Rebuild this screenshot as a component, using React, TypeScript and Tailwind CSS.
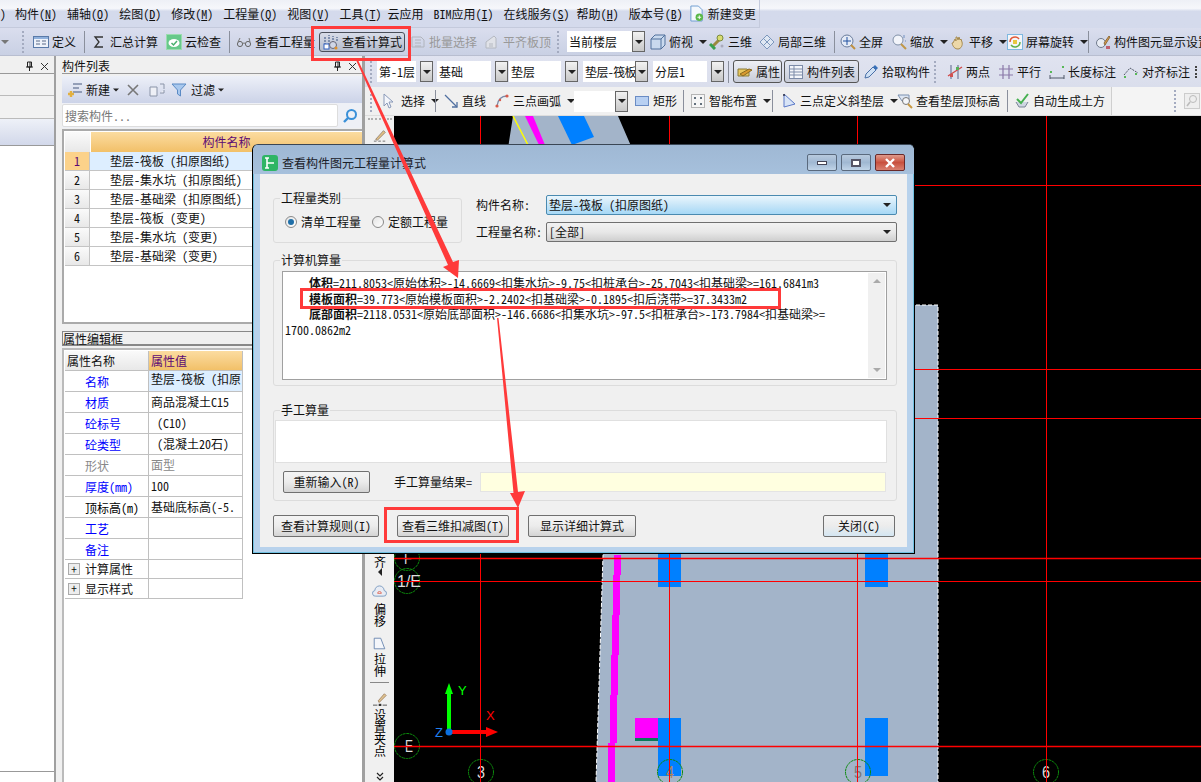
import React from "react";

const Ic = ({ children, className = "" }: { children: React.ReactNode; className?: string }) => (
  <svg viewBox="0 0 16 16" className={`w-4 h-4 shrink-0 ${className}`} fill="none">
    {children}
  </svg>
);

const icons: Record<string, React.ReactNode> = {
  define: (
    <>
      <rect x="0.5" y="2.5" width="15" height="11" fill="#eef2fa" stroke="#5a7aa8" />
      <rect x="1" y="3" width="14" height="2" fill="#8fb0dc" />
      <path d="M3 7h4M3 10h4M9 7h4M9 10h4" stroke="#5a6a88" />
    </>
  ),
  sigma: <path d="M12 3H4l4 5-4 5h8" stroke="#333" strokeWidth="1.3" />,
  cloud: (
    <>
      <rect x="0.5" y="0.5" width="15" height="15" fill="#67c98a" stroke="#9adcae" />
      <ellipse cx="8" cy="9" rx="5.5" ry="4" fill="#fff" />
      <path d="M5.5 9l2 2 3.5-4" stroke="#4ab06e" strokeWidth="1.5" />
    </>
  ),
  glasses: (
    <>
      <circle cx="4" cy="10" r="2.6" stroke="#666" />
      <circle cx="12" cy="10" r="2.6" stroke="#666" />
      <path d="M6.5 9.5q1.5-1 3 0M2 8l2-4M14 8l-1-4" stroke="#777" />
    </>
  ),
  calc: (
    <>
      <path d="M2 11V3M6 11V1M10 9V2M14 7V3" stroke="#7f8fae" strokeWidth="2" strokeDasharray="2 1" />
      <rect x="1" y="10" width="5" height="5" fill="#fff" stroke="#3060c0" />
      <circle cx="10" cy="11" r="3.5" fill="#d0d6e6" stroke="#667" />
      <circle cx="13" cy="14" r="1.5" fill="#e0902a" />
    </>
  ),
  batch: <path d="M2 13V3h9l3 3v7zM5 6h6M5 9h6M5 12h6" stroke="#b0b4bc" />,
  flat: <path d="M2 14V8l8-6 2 2v10zM5 10h4M5 12h4" stroke="#b4b8c0" fill="#e0e2e8" />,
  box: (
    <>
      <path d="M1 5l4-4h10v10l-4 4H1z" fill="#c9d9ee" stroke="#51709c" />
      <path d="M1 5h10v10M11 5l4-4" stroke="#51709c" />
    </>
  ),
  cube3d: (
    <>
      <path d="M3 13l8-8" stroke="#9a8a40" strokeWidth="3" />
      <circle cx="11" cy="4" r="3" fill="#d8dc70" stroke="#7b8a40" />
      <path d="M1 10l5 5" stroke="#38a050" strokeWidth="3" />
      <circle cx="13" cy="12" r="1.5" fill="#aab" />
    </>
  ),
  part3d: <path d="M1 8l7-7 7 7-7 7zM4.5 4.5l7 7M8 1l7 7M4.5 11.5l7-7M8 15l-3.5-3.5" stroke="#7c97bc" fill="#dfe7f3" />,
  full: (
    <>
      <circle cx="7" cy="7" r="6" fill="#e4eaf6" stroke="#6a7c9c" />
      <path d="M7 3v8M3 7h8" stroke="#2050a0" />
      <path d="M11 11l4 4" stroke="#c09040" strokeWidth="2" />
    </>
  ),
  zoom: (
    <>
      <circle cx="7" cy="6" r="5" fill="#f2f4fa" stroke="#8090a8" />
      <path d="M10 10l5 5" stroke="#c09848" strokeWidth="2" />
      <path d="M13 1v3M14 7h1" stroke="#7090c0" />
    </>
  ),
  pan: (
    <path
      d="M3 9l2-4 1 2V3l1 0 1 3 1-3 1 3 1-1 1 3c1 3-1 7-4 7s-5-2-6-6z"
      fill="#ecd8a8"
      stroke="#a58a50"
    />
  ),
  rotate: (
    <>
      <rect x="0.5" y="0.5" width="15" height="15" fill="#f4f6fa" stroke="#7fb8e0" />
      <path d="M3 8a5 5 0 0 1 9-3" stroke="#e05a3a" strokeWidth="1.5" />
      <path d="M13 8a5 5 0 0 1-9 3" stroke="#60b048" strokeWidth="1.5" />
      <rect x="6" y="6" width="4" height="4" fill="#e8c840" />
    </>
  ),
  display: (
    <>
      <circle cx="6" cy="9" r="4.5" fill="#e8ecf4" stroke="#707a8c" />
      <path d="M9 9l5-7 1 1-5 8z" fill="#d89848" stroke="#907040" />
      <path d="M11 12h4v3h-4z" fill="#c06070" />
    </>
  ),
  attr: (
    <>
      <path d="M1 5h9l2 2v5H1z" fill="#e8c860" stroke="#8a7a38" />
      <path d="M3 10l9-5 3 1-9 6z" fill="#d89a30" stroke="#8a6a20" />
    </>
  ),
  list: (
    <>
      <rect x="1.5" y="1.5" width="13" height="13" fill="#f4f6fa" stroke="#7c8ba8" />
      <path d="M6 2v12M2 5h12M2 8h12M2 11h12" stroke="#7c8ba8" />
    </>
  ),
  pick: (
    <>
      <path d="M2 14l1-4 7-7 3 3-7 7z" fill="#cfe0f4" stroke="#4a70a8" />
      <path d="M10 3l2-2 3 3-2 2z" fill="#3870b8" />
    </>
  ),
  twoPoint: (
    <>
      <path d="M4 1v14M11 1v14" stroke="#8088a8" strokeWidth="1.4" />
      <path d="M1 12L15 3" stroke="#d04848" strokeWidth="1.4" />
      <rect x="9" y="3" width="3" height="3" fill="#58b058" />
      <rect x="3" y="10" width="3" height="3" fill="#d05050" />
    </>
  ),
  parallel: <path d="M5 1v14M11 1v14M1 5h14M1 11h14" stroke="#8a78a8" strokeWidth="1.2" />,
  lengthDim: (
    <>
      <path d="M1 14h14M1 11v4M15 11v4" stroke="#505868" />
      <rect x="1" y="7" width="2" height="2" fill="#58b858" />
      <rect x="13" y="2" width="2" height="2" fill="#58b858" />
    </>
  ),
  alignDim: (
    <>
      <path d="M1 11l6-7 8 5" stroke="#505868" strokeDasharray="2 1" />
      <rect x="1" y="12" width="2" height="2" fill="#58b858" />
      <rect x="12" y="9" width="2" height="2" fill="#58b858" />
    </>
  ),
  cursor: <path d="M2 1v12l3-3 2 5 2-1-2-5h4z" fill="#f4f6fb" stroke="#8a9ab8" />,
  line: (
    <>
      <path d="M2 2l12 12" stroke="#5070a0" strokeWidth="1.3" />
      <path d="M9 14h5V9" stroke="#5070a0" strokeWidth="1.3" />
    </>
  ),
  arc: (
    <>
      <path d="M3 13C4 6 8 3 13 3" stroke="#7a8aa8" strokeWidth="1.3" />
      <circle cx="3" cy="13" r="1.6" fill="#d85a4a" />
      <circle cx="13" cy="3" r="1.6" fill="#d85a4a" />
      <circle cx="6" cy="7" r="1.2" fill="#d85a4a" />
    </>
  ),
  rect: <rect x="1.5" y="3.5" width="13" height="9" fill="#b8d0f2" stroke="#6a8cc4" />,
  smart: (
    <>
      <rect x="1.5" y="1.5" width="13" height="13" fill="#f6f6f6" stroke="#777" strokeDasharray="1 1" />
      <path d="M5 4v2M11 4v2M5 10v2M11 10v2M4 5h2M10 5h2M4 11h2M10 11h2" stroke="#345" />
    </>
  ),
  slope: (
    <>
      <path d="M3 1v13l11-3z" fill="#d8e4f6" stroke="#5a78c8" />
      <circle cx="3" cy="2" r="1" fill="#334" />
    </>
  ),
  elevation: (
    <>
      <path d="M1 2h11v6H5z" fill="#dde6f3" stroke="#7a90b0" />
      <circle cx="9" cy="8" r="3.5" fill="#f4f6fa" stroke="#777" />
      <path d="M11 11l4 4" stroke="#c89840" strokeWidth="2" />
    </>
  ),
  earth: (
    <>
      <path d="M2 9l3 5h6l3-5" fill="#cfd6e2" stroke="#7a8496" />
      <path d="M3 6l4 4 7-9" stroke="#46b050" strokeWidth="2" />
    </>
  ),
  searchOff: (
    <>
      <rect x="0.5" y="0.5" width="15" height="15" fill="#eee" stroke="#ccc" />
      <circle cx="9" cy="6" r="3.5" stroke="#bbb" />
      <path d="M6 9l-3 4" stroke="#bbb" strokeWidth="1.5" />
    </>
  ),
};

const Caret = ({ className = "" }: { className?: string }) => (
  <span
    className={`inline-block shrink-0 w-0 h-0 border-l-[4px] border-r-[4px] border-t-[4px] border-l-transparent border-r-transparent border-t-[#222] ${className}`}
  />
);

const Tool = ({
  icon,
  label,
  className = "",
  disabled,
  arrow,
}: {
  icon: string;
  label: string;
  className?: string;
  disabled?: boolean;
  arrow?: boolean;
}) => (
  <div className={`flex items-center gap-[3px] shrink-0 whitespace-nowrap ${disabled ? "text-[#999]" : ""} ${className}`}>
    <Ic>{icons[icon]}</Ic>
    <span>{label}</span>
    {arrow && <Caret className="ml-[3px]" />}
  </div>
);

const Sep = ({ className = "" }: { className?: string }) => (
  <div className={`w-px h-[22px] bg-[#8a8f9c] shrink-0 ${className}`} />
);

const Grip = ({ className = "" }: { className?: string }) => (
  <div className={`h-[22px] border-l-2 border-dotted border-[#a4abc0] shrink-0 ${className}`} />
);

const Combo = ({ text, className, square }: { text?: string; className: string; square?: boolean }) => (
  <div className={`flex h-[21px] shrink-0 items-center ${className}`}>
    <div className="flex-1 min-w-0 h-full bg-white pl-[2px] leading-[21px] whitespace-nowrap overflow-hidden">{text}</div>
    <div
      className={`w-[13px] h-full shrink-0 flex items-center justify-center border border-[#666] bg-gradient-to-b from-[#f2f2f2] to-[#c8c8c8] ${square ? "" : "ml-[4px]"}`}
    >
      <Caret />
    </div>
  </div>
);

const Menu = ({ name, hot, className = "" }: { name: string; hot?: string; className?: string }) => (
  <span className={`shrink-0 whitespace-nowrap ${className}`}>
    {name}
    {hot && (
      <>
        (<span className="underline">{hot}</span>)
      </>
    )}
  </span>
);

const PanelHead = ({ title }: { title?: string }) => (
  <div className="h-[15px] flex items-center justify-between pr-[5px] border-b border-[#999] bg-[#f0f0f0] text-[#111]">
    <span className="leading-none">{title}</span>
    <div className="flex items-center gap-[6px]">
      <svg viewBox="0 0 9 11" className="w-[9px] h-[11px]">
        <path d="M2.5 1h4v5h-4zM1 6h7M4.5 6v4M5 1v5" stroke="#222" fill="none" />
      </svg>
      <svg viewBox="0 0 9 9" className="w-[9px] h-[9px]">
        <path d="M1 1l7 7M8 1l-7 7" stroke="#333" />
      </svg>
    </div>
  </div>
);

const partRows = [
  "垫层-筏板 (扣原图纸)",
  "垫层-集水坑 (扣原图纸)",
  "垫层-基础梁 (扣原图纸)",
  "垫层-筏板 (变更)",
  "垫层-集水坑 (变更)",
  "垫层-基础梁 (变更)",
];

const propRows: { k: string; v?: string; c: string; top?: boolean }[] = [
  { k: "名称", v: "垫层-筏板 (扣原", c: "text-[#0000ff]", top: true },
  { k: "材质", v: "商品混凝土C15", c: "text-[#0000ff]" },
  { k: "砼标号", v: " (C10)", c: "text-[#0000ff]" },
  { k: "砼类型", v: " (混凝土20石)", c: "text-[#0000ff]" },
  { k: "形状", v: "面型", c: "text-[#888]" },
  { k: "厚度(mm)", v: "100", c: "text-[#0000ff]" },
  { k: "顶标高(m)", v: "基础底标高(-5.", c: "text-black" },
  { k: "工艺", c: "text-[#0000ff]" },
  { k: "备注", c: "text-[#0000ff]" },
];

const Plus = () => (
  <span className="w-[12px] h-[12px] border border-[#aaa] bg-[#eee] flex items-center justify-center text-[11px] leading-none ml-[3px] mr-[5px]">
    +
  </span>
);

const Group = ({ title, className, children }: { title: string; className: string; children?: React.ReactNode }) => (
  <div className={`relative border border-[#dcdcdc] rounded-[3px] ${className}`}>
    <span className="absolute left-[6px] -top-[8px] px-px bg-[#f0f0f0] leading-[14px]">{title}</span>
    {children}
  </div>
);

const Btn = ({ label, className = "" }: { label: string; className?: string }) => (
  <div
    className={`h-[22px] flex items-center justify-center rounded-[2px] border border-[#707070] bg-gradient-to-b from-[#f4f4f4] via-[#ececec] to-[#d4d4d4] whitespace-nowrap shrink-0 ${className}`}
  >
    {label}
  </div>
);

const Radio = ({ on }: { on?: boolean }) => (
  <span className="w-[12px] h-[12px] rounded-full border border-[#8a8a8a] bg-gradient-to-br from-[#e4e4e4] to-white flex items-center justify-center shrink-0">
    {on && <span className="w-[6px] h-[6px] rounded-full bg-[#1f6fa8]" />}
  </span>
);

const WinBtn = ({ className, children }: { className: string; children: React.ReactNode }) => (
  <div className={`w-[30px] h-[17px] rounded-[2px] border border-[#5a6a7e] flex items-center justify-center ${className}`}>
    {children}
  </div>
);

const Calc = () => (
  <div className="absolute left-[252px] top-[144px] w-[663px] h-[410px] flex flex-col rounded-t-[6px] border border-black border-t-[#3a4654] bg-[#b8d2ec] shadow-[inset_0_0_0_1px_#6fc0e0]">
    <div className="h-[29px] shrink-0 flex items-center rounded-t-[5px] bg-gradient-to-b from-[#9fb8d4] to-[#a6c0dc] pt-[6px] pl-[9px] pr-[9px]">
      <svg viewBox="0 0 16 16" className="w-[16px] h-[16px] shrink-0">
        <rect width="16" height="16" rx="3" fill="#2fb565" />
        <path d="M5 3v10M5 8h7M3 3h4M3 13h4" stroke="#fff" strokeWidth="1.6" />
      </svg>
      <span className="ml-[4px] text-[#1a2028]">查看构件图元工程量计算式</span>
      <div className="ml-auto flex gap-[4px]">
        <WinBtn className="bg-gradient-to-b from-[#b8cade] via-[#a0b8d2] to-[#c0d4e8]">
          <span className="w-[10px] h-[4px] bg-white border border-[#445]" />
        </WinBtn>
        <WinBtn className="bg-gradient-to-b from-[#b8cade] via-[#a0b8d2] to-[#c0d4e8]">
          <span className="w-[10px] h-[8px] bg-white border-2 border-[#556]" />
        </WinBtn>
        <WinBtn className="bg-gradient-to-b from-[#e09a8c] via-[#c8503e] to-[#d88070] border-[#6a2a2a]">
          <svg viewBox="0 0 12 10" className="w-[12px] h-[10px]">
            <path d="M2 1l8 8M10 1l-8 8" stroke="#fff" strokeWidth="2.4" />
          </svg>
        </WinBtn>
      </div>
    </div>
    <div className="mx-[7px] h-[373px] bg-[#f0f0f0] flex flex-col pl-[13px]">
      <div className="flex mt-[21px] h-[48px]">
        <Group title="工程量类别" className="w-[189px] h-[45px] mt-[3px] flex items-center pl-[11px] pt-[2px]">
          <Radio on />
          <span className="ml-[4px]">清单工程量</span>
          <span className="ml-[11px]">
            <Radio />
          </span>
          <span className="ml-[4px]">定额工程量</span>
        </Group>
        <div className="ml-[14px] flex flex-col gap-[7px]">
          <div className="flex items-center h-[20px]">
            <span className="w-[70px]">构件名称:</span>
            <div className="w-[351px] h-[20px] rounded-[2px] border border-[#4a8ab0] bg-gradient-to-b from-[#eaf6fd] via-[#c8e6f8] to-[#a6d8f6] flex items-center pl-[2px]">
              <span>垫层-筏板 (扣原图纸)</span>
              <Caret className="ml-auto mr-[5px]" />
            </div>
          </div>
          <div className="flex items-center h-[20px]">
            <span className="w-[70px]">工程量名称:</span>
            <div className="w-[351px] h-[20px] rounded-[2px] border border-[#707070] bg-gradient-to-b from-[#f2f2f2] via-[#e8e8e8] to-[#cfcfcf] flex items-center pl-[2px]">
              <span>[全部]</span>
              <Caret className="ml-auto mr-[5px]" />
            </div>
          </div>
        </div>
      </div>
      <Group title="计算机算量" className="w-[624px] h-[126px] mt-[17px] pt-[10px] pl-[8px]">
        <div className="w-[605px] h-[109px] bg-white border border-[#a0a0a0] flex relative">
          <div className="flex-1 pt-[3px] leading-[15.7px] whitespace-nowrap pl-[2px]">
            <p className="pl-[24px]">
              <b>体积</b>=211.8053&lt;原始体积&gt;-14.6669&lt;扣集水坑&gt;-9.75&lt;扣桩承台&gt;-25.7043&lt;扣基础梁&gt;=161.6841m3
            </p>
            <p className="pl-[24px]">
              <b>模板面积</b>=39.773&lt;原始模板面积&gt;-2.2402&lt;扣基础梁&gt;-0.1895&lt;扣后浇带&gt;=37.3433m2
            </p>
            <p className="pl-[24px]">
              <b>底部面积</b>=2118.0531&lt;原始底部面积&gt;-146.6686&lt;扣集水坑&gt;-97.5&lt;扣桩承台&gt;-173.7984&lt;扣基础梁&gt;=
            </p>
            <p>1700.0862m2</p>
          </div>
          <div className="w-[17px] my-[1px] mr-[1px] bg-[#f0f0f0] flex flex-col items-center justify-between py-[6px]">
            <span className="w-0 h-0 border-l-[4px] border-r-[4px] border-b-[4px] border-l-transparent border-r-transparent border-b-[#aaa]" />
            <span className="w-0 h-0 border-l-[4px] border-r-[4px] border-t-[4px] border-l-transparent border-r-transparent border-t-[#aaa]" />
          </div>
        </div>
      </Group>
      <Group title="手工算量" className="w-[624px] h-[91px] mt-[24px] pt-[9px] pl-[1px]">
        <div className="w-[612px] h-[43px] bg-white border border-[#e0e0e0]" />
        <div className="flex items-center mt-[8px]">
          <Btn label="重新输入(R)" className="w-[87px] ml-[8px]" />
          <span className="ml-[24px]">手工算量结果=</span>
          <div className="ml-[8px] w-[406px] h-[20px] bg-[#ffffe0] border border-[#e4e4e4]" />
        </div>
      </Group>
      <div className="flex mt-[14px]">
        <Btn label="查看计算规则(I)" className="w-[106px]" />
        <Btn label="查看三维扣减图(T)" className="w-[112px] ml-[18px]" />
        <Btn label="显示详细计算式" className="w-[108px] ml-[19px]" />
        <Btn label="关闭(C)" className="w-[72px] ml-[187px] border-[#3c8ab4] bg-gradient-to-b from-[#f0fafe] to-[#d4e6f2]" />
      </div>
    </div>
  </div>
);

const Bubble = ({
  x,
  y,
  t,
  c = "#ddd",
  w = 8,
  dx = 0,
}: {
  x: number;
  y: number;
  t: string;
  c?: string;
  w?: number;
  dx?: number;
}) => (
  <g>
    <circle cx={x} cy={y} r="12.5" fill="none" stroke="#0c8a0c" strokeDasharray="3 0.6" />
    <text
      x={x + dx}
      y={y + 6}
      fontSize={17}
      fill={c}
      textAnchor="middle"
      textLength={w}
      lengthAdjust="spacingAndGlyphs"
      fontFamily="Liberation Sans, sans-serif"
    >
      {t}
    </text>
  </g>
);

const magentaSteps = [
  [614, 555, 7, 20],
  [613, 575, 7, 40],
  [612, 615, 7, 40],
  [611, 655, 7, 40],
  [610, 695, 7, 48],
  [608, 743, 7, 40],
];

const Canvas = () => (
  <svg viewBox="394 116 807 666" className="w-[807px] h-[666px] bg-black block shrink-0">
    <polygon points="513,116 618,116 700,305 938,305 938,782 596,782 603,555 500,200" fill="#a3b4c9" />
    <path d="M700 305H938V782" stroke="#fff" strokeDasharray="4 2" fill="none" />
    <path d="M603 555L596 782" stroke="#fff" strokeDasharray="4 2" fill="none" />
    <path d="M513 116L528 145" stroke="#ff0" strokeWidth="1.5" />
    <polygon points="525,116 533,116 545,145 539,145" fill="#ff00ff" />
    <polygon points="558,116 584,116 594,137 572,145" fill="#0080ff" />
    {magentaSteps.map(([x, y, w, h]) => (
      <rect key={y} x={x} y={y} width={w} height={h} fill="#ff00ff" />
    ))}
    <rect x="635" y="718" width="23" height="20" fill="#ff00ff" />
    <rect x="635" y="738" width="23" height="3" fill="#0a7a5a" />
    <rect x="658" y="550" width="23" height="37" fill="#0080ff" />
    <rect x="658" y="718" width="23" height="58" fill="#0080ff" />
    <rect x="865" y="550" width="23" height="37" fill="#0080ff" />
    <rect x="865" y="718" width="23" height="58" fill="#0080ff" />
    <Bubble x={407} y={558} t="F" dx={1} />
    <Bubble x={407} y={581} t="1/E" w={24} dx={2} />
    <Bubble x={407} y={746} t="E" dx={2} />
    <Bubble x={481} y={772} t="3" />
    <Bubble x={670} y={772} t="4" c="#b08458" />
    <Bubble x={858} y={772} t="5" c="#777" />
    <Bubble x={1046} y={772} t="6" />
    <path
      d="M480.5 116V782M669.5 116V782M857.5 116V782M1046.5 116V782M394 185.5H1201M394 369.5H1201M394 418.5H1201M394 581.5H1201"
      stroke="#f00"
    />
    <path d="M394 558.5H1201M394 746.5H1201" stroke="#f00" strokeWidth="1.3" />
    <path d="M449 732V690" stroke="#0f0" strokeWidth="4" />
    <polygon points="449,683 445,694 453,694" fill="#0f0" />
    <path d="M449 732H488" stroke="#f00" strokeWidth="4" />
    <polygon points="498,732 486,727 486,737" fill="#f00" />
    <circle cx="449" cy="732" r="3.5" fill="#0a70e0" />
    <text x="458" y="695" fontSize="13" fill="#0f0" fontFamily="Liberation Sans, sans-serif">Y</text>
    <text x="486" y="720" fontSize="13" fill="#f00" fontFamily="Liberation Sans, sans-serif">X</text>
    <text x="435" y="737" fontSize="13" fill="#2080f0" fontFamily="Liberation Sans, sans-serif">Z</text>
  </svg>
);

const Stack = ({ t }: { t: string }) => (
  <div className="[writing-mode:vertical-rl] leading-[14px] text-black whitespace-nowrap">{t}</div>
);

const SideBar = () => (
  <div className="w-[29px] h-[666px] shrink-0 bg-[#f0f0f0] flex flex-col items-center">
    <div className="w-[24px] border-t-2 border-dotted border-[#b0b0b0] mt-[2px]" />
    <svg viewBox="0 0 16 16" className="w-[16px] h-[14px] mt-[8px] shrink-0">
      <path d="M3 13L12 3l2 2-9 9z" fill="#e4c080" stroke="#908070" />
      <path d="M1 15h14" stroke="#666" strokeDasharray="3 2" />
    </svg>
    <div className="h-[414px] shrink-0" />
    <Stack t="齐" />
    <Caret className="mt-[2px] rotate-90" />
    <svg viewBox="0 0 16 14" className="w-[15px] h-[13px] mt-[11px] shrink-0">
      <path d="M4 12a3 3 0 0 1-1-6 5 5 0 0 1 10 0 3 3 0 0 1-1 6z" fill="#e8ecf4" stroke="#7a9ac0" />
      <path d="M6 9a2 2 0 0 1 4 0z" fill="none" stroke="#e07060" />
    </svg>
    <div className="mt-[5px]">
      <Stack t="偏移" />
    </div>
    <svg viewBox="0 0 16 16" className="w-[13px] h-[13px] mt-[10px] shrink-0">
      <path d="M1.5 1.5h8l5 13h-13z" fill="#f4f6fa" stroke="#5a7aa8" />
    </svg>
    <div className="mt-[3px]">
      <Stack t="拉伸" />
    </div>
    <div className="w-[19px] h-px bg-[#888] mt-[5px] shrink-0" />
    <svg viewBox="0 0 16 16" className="w-[16px] h-[14px] mt-[9px] shrink-0">
      <path d="M6 10L13 2l2 2-8 8z" fill="#e0c490" stroke="#a08060" />
      <path d="M0 15h5M11 15h5" stroke="#444" />
      <rect x="6.5" y="13.5" width="3" height="3" fill="#333" />
    </svg>
    <div className="mt-[3px]">
      <Stack t="设置夹点" />
    </div>
    <svg viewBox="0 0 8 9" className="w-[8px] h-[9px] mt-[15px] shrink-0">
      <path d="M1 1l3 3 3-3M1 5l3 3 3-3" stroke="#222" fill="none" strokeWidth="1.2" />
    </svg>
  </div>
);

const Overlay = () => (
  <svg viewBox="0 0 1201 782" className="absolute left-0 top-0 w-[1201px] h-[782px] pointer-events-none">
    <g fill="none" stroke="#ff3a3a" strokeWidth="3">
      <rect x="312.5" y="27.5" width="97" height="32" />
      <rect x="301.5" y="289.5" width="478" height="18" />
      <rect x="385.5" y="508.5" width="132" height="33" />
    </g>
    <polygon points="356,60 358,60 453,262 459,260 458,278 443,267 448,265" fill="#ff3a3a" />
    <polygon points="497,318 498.5,318 518,492 525,491 518,508 510,493 513.5,493" fill="#ff3a3a" />
  </svg>
);

export default function App() {
  return (
    <div className="relative w-[1201px] h-[782px] overflow-hidden flex flex-col bg-[#f0f0f0] text-[12px] text-[#111] [font-family:'Noto_Sans_Mono_CJK_SC','Noto_Sans_CJK_SC',monospace]">
      <div className="h-7 shrink-0 flex items-center bg-gradient-to-b from-[#eef0f6] via-[#f6f7fb] via-30% to-[#d4daec] to-40% relative">
        <div className="flex items-center w-[760px] h-7 shrink-0 border-r border-b border-[#c4cadc] gap-[10px]">
          <Menu name=")" className="-mr-[1px]" />
          <Menu name="构件" hot="N" />
          <Menu name="辅轴" hot="O" />
          <Menu name="绘图" hot="D" />
          <Menu name="修改" hot="M" />
          <Menu name="工程量" hot="Q" />
          <Menu name="视图" hot="V" />
          <Menu name="工具" hot="T" />
          <Menu name="云应用" className="-ml-[4px]" />
          <Menu name="BIM应用" hot="I" />
          <Menu name="在线服务" hot="S" />
          <Menu name="帮助" hot="H" className="-ml-[3px]" />
          <Menu name="版本号" hot="B" />
          <svg viewBox="0 0 16 18" className="w-[15px] h-[17px] -mt-px -ml-[4px] shrink-0">
            <path d="M2 1h8l4 4v12H2z" fill="#f4f8fc" stroke="#6a9ad0" />
            <circle cx="11" cy="13" r="4" fill="#5ab848" />
            <path d="M9 13h4M11 11v4" stroke="#fff" />
          </svg>
          <span className="-ml-[6px] shrink-0 whitespace-nowrap">新建变更</span>
        </div>
      </div>

      <div className="h-7 shrink-0 flex items-center overflow-hidden bg-gradient-to-b from-[#dadeee] to-[#c9d0e4] border-b border-[#b8bed0]">
        <div className="w-[22px] shrink-0 flex items-center pl-[1px]">
          <Caret className="border-t-[#777]" />
        </div>
        <Grip className="mr-[6px]" />
        <Tool icon="define" label="定义" className="w-[52px] pl-[3px]" />
        <Sep className="ml-[2px] mr-[3px]" />
        <Tool icon="sigma" label="汇总计算" className="w-[75px] pl-[3px]" />
        <Tool icon="cloud" label="云检查" className="w-[62px] pl-[3px]" />
        <Sep className="ml-[4px] mr-[3px]" />
        <Tool icon="glasses" label="查看工程量" className="w-[86px] pl-[3px]" />
        <Tool
          icon="calc"
          label="查看计算式"
          className="w-[86px] h-[20px] pl-[3px] rounded-[3px] border border-[#4a4f5a] bg-gradient-to-b from-[#d8dce8] to-[#b4bccc]"
        />
        <Tool icon="batch" label="批量选择" disabled className="w-[76px] pl-[5px]" />
        <Tool icon="flat" label="平齐板顶" disabled className="w-[74px] pl-[3px]" />
        <Grip className="ml-[2px] mr-[8px]" />
        <Combo text="当前楼层" className="w-[78px]" square />
        <Tool icon="box" label="俯视" arrow className="w-[61px] pl-[5px]" />
        <Tool icon="cube3d" label="三维" className="w-[48px] pl-[3px]" />
        <Tool icon="part3d" label="局部三维" className="w-[74px] pl-[5px]" />
        <Sep className="ml-[6px] mr-[5px]" />
        <Tool icon="full" label="全屏" className="w-[51px]" />
        <Tool icon="zoom" label="缩放" arrow className="w-[59px]" />
        <Tool icon="pan" label="平移" arrow className="w-[57px]" />
        <Tool icon="rotate" label="屏幕旋转" arrow className="w-[81px]" />
        <Sep className="mr-[6px]" />
        <Tool icon="display" label="构件图元显示设置" />
      </div>

      <div className="flex-1 min-h-0 flex">
        <div className="w-[56px] shrink-0 pt-[3px] bg-[#f0f0f0] border-r-2 border-[#a0a0a0] flex flex-col">
          <PanelHead />
          <div className="h-[22px] border-b border-[#bbb] bg-[#f2f2f2]" />
          <div className="h-[23px] border-b border-[#bbb] bg-[#f2f2f2]" />
          <div className="h-[27px] border-b border-[#999] bg-gradient-to-b from-[#eef1f8] to-[#d2d8ea]" />
          <div className="flex-1 bg-white" />
          <div className="h-[11px] bg-white border-t border-[#999]" />
        </div>
        <div className="w-[6px] shrink-0" />
        <div className="w-[300px] shrink-0 pt-[3px] flex flex-col">
          <PanelHead title="构件列表" />
          <div className="h-[27px] mt-[2px] flex items-center pl-[5px] bg-gradient-to-b from-[#edf0f8] to-[#ccd3e8]">
            <svg viewBox="0 0 16 16" className="w-[16px] h-[16px] shrink-0">
              <path d="M6 2h9M6 6h6M6 10h9" stroke="#7a86a4" strokeWidth="1.5" />
              <path d="M4 9v6M1 12h6" stroke="#e2b040" strokeWidth="2.4" />
            </svg>
            <span className="ml-[3px]">新建</span>
            <Caret className="ml-[2px] scale-75" />
            <svg viewBox="0 0 14 14" className="w-[14px] h-[14px] ml-[6px] shrink-0">
              <path d="M2 2l10 10M12 2L2 12" stroke="#777" strokeWidth="1.6" />
            </svg>
            <svg viewBox="0 0 16 16" className="w-[16px] h-[16px] ml-[9px] shrink-0">
              <path d="M1 5h7v9H1zM11 2h4M15 2v5M11 11h4v-3" stroke="#8a94a8" fill="#eef0f6" />
            </svg>
            <svg viewBox="0 0 16 16" className="w-[16px] h-[16px] ml-[6px] shrink-0">
              <path d="M1 2h14L9.5 8v6l-3-2V8z" fill="#a8c8ee" stroke="#5a8ac4" />
            </svg>
            <span className="ml-[4px]">过滤</span>
            <Caret className="ml-[2px] scale-75" />
          </div>
          <div className="h-[25px] flex items-center bg-[#eef0f6] pr-[2px]">
            <div className="w-[276px] h-[23px] bg-white border border-[#ddd] rounded-[2px] pl-[2px] leading-[21px] text-[#777]">
              搜索构件...
            </div>
            <svg viewBox="0 0 16 16" className="w-[16px] h-[16px] ml-[4px]">
              <circle cx="9.5" cy="6.5" r="4.5" fill="none" stroke="#3a90d8" strokeWidth="2" />
              <path d="M6 10l-4 4" stroke="#3a90d8" strokeWidth="2.4" />
            </svg>
          </div>
          <div className="h-[195px] mt-[1px] bg-white border-l-2 border-b-2 border-t-2 border-[#aaa] pl-[1px] pt-px">
            <div className="flex h-[20px]">
              <div className="w-[25px] bg-gradient-to-b from-[#fafafa] to-[#e8e8e8]" />
              <div className="flex-1 ml-px bg-gradient-to-b from-[#fbdca0] to-[#f2c068] text-center leading-[20px] text-[#5c0a74]">
                构件名称
              </div>
            </div>
            {partRows.map((r, i) => (
              <div key={r} className="flex h-[19px] border-b border-[#c4c4c4]">
                <div
                  className={`w-[25px] text-center leading-[18px] border-r border-[#c4c4c4] ${i === 0 ? "bg-[#fcd28a] text-[#5c0a74]" : "bg-gradient-to-b from-[#fafafa] to-[#e8e8e8]"}`}
                >
                  {i + 1}
                </div>
                <div className={`flex-1 pl-[20px] leading-[18px] whitespace-nowrap ${i === 0 ? "bg-[#ddeeff]" : ""}`}>{r}</div>
              </div>
            ))}
          </div>
          <div className="h-[7px] shrink-0" />
          <div className="h-[15px] shrink-0 border-b-2 border-[#888] leading-[13px] bg-[#f0f0f0] border-t border-t-[#888] border-l border-l-[#888]">
            属性编辑框
          </div>
          <div className="flex-1 bg-white mt-[2px] border-l-2 border-t-2 border-[#bbb] pl-[1px] pt-px">
            <div className="w-[178px] border-r border-b border-[#c0c0c0]">
              <div className="flex h-[20px] border-b border-[#c0c0c0]">
                <div className="w-[84px] border-r border-[#c0c0c0] pl-[2px] leading-[20px] bg-gradient-to-b from-[#fafafa] to-[#e8e8e8]">
                  属性名称
                </div>
                <div className="flex-1 pl-[2px] leading-[20px] text-[#5c0a74] bg-gradient-to-b from-[#fbdca0] to-[#f2c068]">
                  属性值
                </div>
              </div>
              {propRows.map((r) => (
                <div key={r.k} className="flex h-[21px] border-b border-[#c0c0c0] last:border-b">
                  <div className={`w-[84px] border-r border-[#c0c0c0] pl-[20px] leading-[21px] ${r.c}`}>{r.k}</div>
                  <div
                    className={`flex-1 pl-[2px] whitespace-pre overflow-hidden ${r.top ? "bg-[#ddeeff] leading-[16px]" : "leading-[20px]"} ${r.v === "面型" ? "text-[#888]" : ""}`}
                  >
                    {r.v}
                  </div>
                </div>
              ))}
              {["计算属性", "显示样式"].map((k) => (
                <div key={k} className="flex h-[19px] border-b border-[#c0c0c0] last:border-b-0">
                  <div className="w-[84px] border-r border-[#c0c0c0] flex items-center">
                    <Plus />
                    {k}
                  </div>
                </div>
              ))}
            </div>
          </div>
        </div>
        <div className="w-[3px] shrink-0 bg-[#a0a0a0]" />
        <div className="flex-1 min-w-0 flex flex-col">
          <div className="h-[31px] shrink-0 flex items-center bg-gradient-to-b from-[#e0e3f0] to-[#dadeec] pl-[5px] whitespace-nowrap overflow-hidden">
            <Grip className="mr-[5px]" />
            <Combo text="第-1层" className="w-[56px]" />
            <Combo text="基础" className="w-[71px] ml-[4px]" />
            <Combo text="垫层" className="w-[69px] ml-[1px]" />
            <Combo text="垫层-筏板" className="w-[65px] ml-[5px] tracking-[-0.6px]" square />
            <Combo text="分层1" className="w-[71px] ml-[5px]" />
            <Sep className="ml-[4px] mr-[4px]" />
            <Tool
              icon="attr"
              label="属性"
              className="w-[49px] h-[23px] pl-[3px] rounded-[3px] border border-[#555] bg-gradient-to-b from-[#eef0f6] to-[#c8ccd8]"
            />
            <Tool
              icon="list"
              label="构件列表"
              className="w-[75px] h-[23px] ml-[2px] pl-[3px] rounded-[3px] border border-[#555] bg-gradient-to-b from-[#e4e8f2] to-[#c8ccd8]"
            />
            <Tool icon="pick" label="拾取构件" className="w-[72px] pl-[4px]" />
            <Grip className="ml-[3px] mr-[11px]" />
            <Tool icon="twoPoint" label="两点" className="w-[51px]" />
            <Tool icon="parallel" label="平行" className="w-[51px]" />
            <Tool icon="lengthDim" label="长度标注" className="w-[74px]" />
            <Tool icon="alignDim" label="对齐标注" className="w-[72px]" />
            <div className="w-[2px] h-[12px] shrink-0 border-l-2 border-dotted border-[#444]" />
          </div>
          <div className="h-[29px] shrink-0 flex items-center bg-[#f0f0f0] border-b border-[#ddd] pl-[5px] whitespace-nowrap overflow-hidden">
            <Grip className="mr-[9px]" />
            <Tool icon="cursor" label="选择" arrow className="w-[54px] pl-[1px] gap-0" />
            <Sep className="mr-[5px]" />
            <Tool icon="line" label="直线" className="w-[51px] pl-[2px]" />
            <Tool icon="arc" label="三点画弧" arrow className="w-[80px] pl-[2px]" />
            <Combo className="w-[54px] ml-[2px]" square />
            <Tool icon="rect" label="矩形" className="w-[49px] ml-[6px]" />
            <Sep className="mr-[6px]" />
            <Tool icon="smart" label="智能布置" arrow className="w-[82px]" />
            <Sep className="mr-[8px]" />
            <Tool icon="slope" label="三点定义斜垫层" arrow className="w-[116px]" />
            <Tool icon="elevation" label="查看垫层顶标高" className="w-[109px]" />
            <Sep className="ml-[1px] mr-[6px]" />
            <Tool icon="earth" label="自动生成土方" className="w-[94px]" />
            <div className="ml-[3px] flex-1 flex items-center h-full border-l border-[#cfcfcf] bg-[#f4f4f4] pl-[62px]">
              <Grip className="mr-[8px]" />
              <Ic>{icons.searchOff}</Ic>
            </div>
          </div>
          <div className="flex-1 min-h-0 flex">
            <SideBar />
            <Canvas />
          </div>
        </div>
      </div>

      <Calc />
      <Overlay />
    </div>
  );
}
